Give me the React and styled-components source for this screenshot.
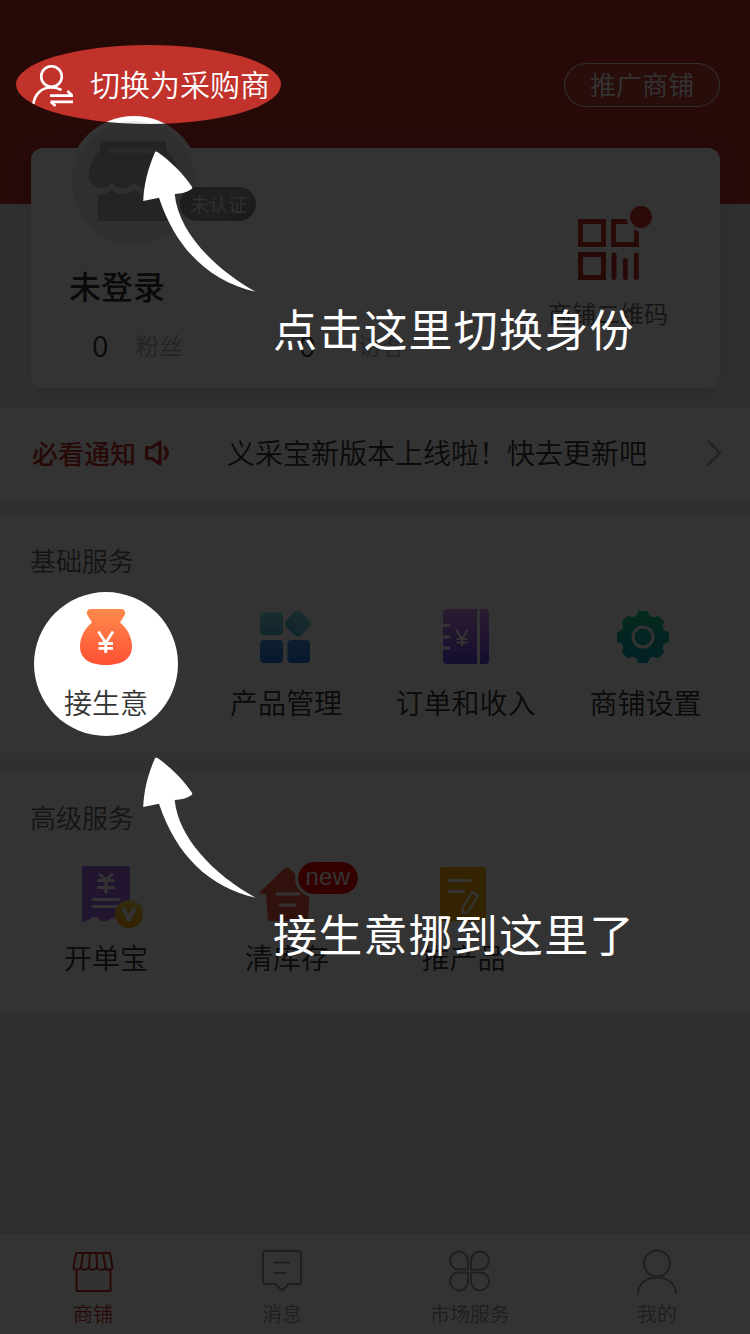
import React from "react";
import styled, { createGlobalStyle } from "styled-components";

const RED = "#c1322b";

const GlobalStyle = createGlobalStyle`
  *, *::before, *::after { box-sizing: border-box; }
  body {
    margin: 0;
    background: #f0f0f0;
    font-family: "Noto Sans CJK SC", "Noto Sans", sans-serif;
    font-weight: 350;
    color: #333;
  }
  svg { display: block; overflow: visible; flex: none; }
`;

const Screen = styled.div`
  position: relative;
  display: flex;
  flex-direction: column;
  width: 750px;
  height: 1334px;
  overflow: hidden;
  background: #f0f0f0;
  white-space: nowrap;
`;

const Hero = styled.header`
  height: 408px;
  flex: none;
  background: linear-gradient(${RED} 204px, #f0f0f0 204px);
`;

const HeroBar = styled.div`
  display: flex;
  justify-content: space-between;
  height: 148px;
  padding: 63px 30px 0 32px;
`;

const SwitchRole = styled.div`
  display: flex;
  align-items: center;
  gap: 17px;
  height: 44px;
  color: #fff;
  font-size: 30px;
  line-height: 40px;
`;

const SwitchLabel = styled.span`
  padding-bottom: 4px;
`;

const PromoteButton = styled.div`
  width: 156px;
  height: 44px;
  border: 1px solid rgba(255, 255, 255, 0.9);
  border-radius: 22px;
  background: rgba(255, 255, 255, 0.08);
  color: #fff;
  font-size: 26px;
  line-height: 39px;
  text-align: center;
`;

const ShopCard = styled.section`
  position: relative;
  display: flex;
  justify-content: space-between;
  height: 240px;
  margin: 0 30px 0 31px;
  padding: 0 52px 0 38px;
  border-radius: 12px;
  background: #fff;
  box-shadow: 0 6px 24px rgba(0, 0, 0, 0.14);
`;

const Avatar = styled.div`
  position: absolute;
  left: 37px;
  top: -32px;
  width: 132px;
  height: 132px;
  padding: 5px 4px 3px;
  border-radius: 50%;
  background: #fff;
`;

const AvatarFace = styled.div`
  width: 124px;
  height: 124px;
  border-radius: 50%;
  background: #ececec;
`;

const UnverifiedTag = styled.div`
  position: absolute;
  left: 112px;
  top: 71px;
  width: 76px;
  height: 34px;
  padding-left: 10px;
  border-radius: 17px;
  background: linear-gradient(135deg, #888, #a0a0a0 50%, #7d7d7d);
  color: #f2f2f2;
  font-size: 19px;
  line-height: 33px;
`;

const ShopInfo = styled.div`
  padding-top: 114px;
`;

const ShopName = styled.h1`
  margin: 0;
  font-size: 32px;
  font-weight: 500;
  line-height: 46px;
`;

const Stats = styled.div`
  display: flex;
  margin-top: 14px;
  padding-left: 23px;
  line-height: 44px;
`;

const Stat = styled.div`
  display: flex;
  gap: ${(p) => p.$gap}px;
  width: 207px;
  font-size: 30px;
`;

const StatLabel = styled.span`
  padding-top: 1px;
  color: #b0b0b0;
  font-size: 24px;
`;

const QrEntry = styled.div`
  display: flex;
  flex-direction: column;
  align-items: center;
  gap: 15px;
  padding-top: 57px;
  color: #666;
  font-size: 24px;
  line-height: 34px;
`;

const Notice = styled.section`
  display: flex;
  align-items: center;
  height: 90px;
  flex: none;
  padding: 0 28px 0 32px;
  background: #fff;
`;

const NoticeTag = styled.div`
  display: flex;
  align-items: center;
  gap: 9px;
  width: 195px;
  color: ${RED};
  font-size: 26px;
  font-weight: 500;
`;

const NoticeLabel = styled.span`
  padding-bottom: 2px;
`;

const NoticeText = styled.div`
  flex: 1;
  padding-bottom: 2px;
  font-size: 28px;
`;

const Panel = styled.section`
  height: ${(p) => p.$height}px;
  flex: none;
  margin-top: 20px;
  padding: 29px 14px 0 16px;
  background: #fff;
`;

const PanelTitle = styled.h2`
  margin: ${(p) => p.$shift || 0}px 0 0 14px;
  color: #666;
  font-size: 26px;
  font-weight: 350;
  line-height: 26px;
`;

const Services = styled.div`
  display: grid;
  grid-template-columns: ${(p) => p.$columns};
  margin-top: 29px;
`;

const Service = styled.div`
  display: flex;
  flex-direction: column;
  align-items: center;
  font-size: 28px;
  line-height: 30px;
`;

const ServiceIcon = styled.div`
  position: relative;
  display: flex;
  align-items: center;
  justify-content: center;
  height: 70px;
  margin-bottom: ${(p) => p.$below}px;
  margin-left: ${(p) => p.$nudge || 0}px;
`;

const NewBadge = styled.div`
  position: absolute;
  left: 35px;
  top: 0;
  width: 66px;
  height: 38px;
  border: 3px solid #fff;
  border-radius: 19px;
  background: #f00;
  background-clip: padding-box;
  color: #fff;
  font-family: "Liberation Sans", sans-serif;
  font-size: 24px;
  letter-spacing: 0.4px;
  line-height: 30px;
  text-align: center;
`;

const TabBar = styled.nav`
  display: grid;
  grid-template-columns: 186px 192px 184px 190px;
  height: 101px;
  margin-top: auto;
  border-top: 1px solid #d0d0d0;
  background: #fff;
`;

const Tab = styled.div`
  display: flex;
  flex-direction: column;
  align-items: center;
  padding-top: 15px;
  gap: 7px;
  color: ${(p) => (p.$active ? RED : "#999")};
  font-size: 20px;
  line-height: 28px;
`;

const Guide = styled.div`
  position: absolute;
  inset: 0;
`;

const Layer = styled.svg`
  position: absolute;
  left: ${(p) => p.$x || 0}px;
  top: ${(p) => p.$y || 0}px;
`;

const Hint = styled.p`
  position: absolute;
  left: 273px;
  top: ${(p) => p.$y}px;
  margin: 0;
  color: #fff;
  font-size: 44px;
  font-weight: 400;
  letter-spacing: ${(p) => p.$spacing}px;
  line-height: 60px;
`;

const Gradient = ({ id, from, to }) => (
  <linearGradient id={id} x1="0" y1="0" x2="0" y2="1">
    <stop offset="0" stopColor={from} />
    <stop offset="1" stopColor={to} />
  </linearGradient>
);

const SwitchUserIcon = () => (
  <svg width="41" height="44" fill="none" stroke="#fff" strokeWidth="2.6">
    <circle cx="19.5" cy="13.5" r="10.3" />
    <path d="M1.3 41C3 31 9.5 24.5 19 24.5Q25 24.5 29.5 27" />
    <path d="M18 32.700H41M18.500 38.800H41" strokeWidth="2.800" />
    <path d="M40 32.500L35.500 28M19 39L23.500 43" />
  </svg>
);

const StoreIcon = () => (
  <svg width="124" height="124" viewBox="72 121 124 124" fill="#b6b6b6">
    <path d="M102 140.700H164Q166 140.700 166 142.700V149Q179 165 179 176A11.500 11.500 0 0 1 156.700 183Q146 194 134 183Q123 194 111.700 183A13 13 0 0 1 88.700 176C88.700 168 93 159 100 149V142.700Q100 140.700 102 140.700Z" />
    <path d="M98 195Q105 195 111.700 189.500Q123 199 134 189.500Q146 199 156.700 189.500Q163 195 170 195V221H98Z" />
    <rect x="108.700" y="149" width="49" height="4" fill="#cfcfcf" />
  </svg>
);

const QrIcon = () => (
  <svg width="62" height="76" viewBox="577 205 62 76">
    <g fill="none" stroke={RED} strokeWidth="5">
      <rect x="580.500" y="221.500" width="23" height="23" />
      <rect x="613.500" y="221.500" width="23" height="23" />
      <rect x="580.500" y="254.500" width="23" height="23" />
      <path d="M614 255V277.500M625.300 260.500V277.500M636.300 255V277.500" strokeLinecap="round" />
    </g>
    <circle cx="641" cy="217" r="14.500" fill="#fff" />
    <circle cx="641" cy="217" r="11" fill="#d8382c" />
  </svg>
);

const SpeakerIcon = () => (
  <svg width="26" height="28" viewBox="0 0 26 28" fill="none" stroke={RED} strokeWidth="3.200">
    <path d="M1.600 8.500H7L15 3V25L7 19.500H1.600Z" strokeLinejoin="round" />
    <path d="M19 7.500Q25.500 14 19 20.500" />
  </svg>
);

const ChevronIcon = () => (
  <svg width="16" height="28" viewBox="0 0 16 28" fill="none" stroke="#aaa" strokeWidth="2.500">
    <path d="M1.500 1.500L14 14L1.500 26.500" />
  </svg>
);

const MoneyBagIcon = () => (
  <svg width="52" height="56">
    <Gradient id="bag" from="#ff8a4c" to="#ff5033" />
    <path
      fill="url(#bag)"
      d="M10 0H42Q46 1 45 5.500L40 13.500C47 19 52 28 52 37.500C52 50 42 56 26 56C10 56 0 50 0 37.500C0 28 5 19 12 13.500L7 5.500Q6 1 10 0Z"
    />
    <path d="M18.400 22.500L25.700 34L33 22.500M25.700 33V44M18.500 34.500H33M18.500 39.300H33" fill="none" stroke="#fff" strokeWidth="2.800" />
  </svg>
);

const ProductsIcon = () => (
  <svg width="52" height="56" viewBox="0 0 52 56">
    <Gradient id="prodTop" from="#7fe0ec" to="#55b8e0" />
    <Gradient id="prodBottom" from="#3f9ae8" to="#2673e0" />
    <rect y="3.500" width="23" height="22.500" rx="4" fill="url(#prodTop)" />
    <rect x="27.500" y="4" width="21.500" height="21.500" rx="5" fill="url(#prodTop)" transform="rotate(45 38.250 14.500)" />
    <rect y="31" width="23" height="23" rx="4" fill="url(#prodBottom)" />
    <rect x="27.500" y="31" width="22.500" height="23" rx="4" fill="url(#prodBottom)" />
  </svg>
);

const OrdersIcon = () => (
  <svg width="46" height="56">
    <Gradient id="orders" from="#d98ae8" to="#6a46f0" />
    <rect width="46" height="55" rx="4" fill="url(#orders)" />
    <path d="M35.500 0V55" stroke="#fff" strokeWidth="3" />
    <path d="M0 16.500H6M0 28H6M0 39H6" stroke="#fff" strokeWidth="2.800" strokeLinecap="round" />
    <path d="M13 20.500L19 30L25 20.500M19 29V37M13.500 30H24.500M13.500 33.500H24.500" fill="none" stroke="#fff" strokeWidth="2.200" />
  </svg>
);

const GearIcon = () => (
  <svg width="52" height="52" viewBox="-26 -26 52 52">
    <linearGradient id="gear" gradientUnits="userSpaceOnUse" x1="0" y1="-26" x2="0" y2="26">
      <stop offset="0" stopColor="#19d28c" />
      <stop offset="1" stopColor="#0f9fbe" />
    </linearGradient>
    <path
      fill="url(#gear)"
      d="M-5 -26H5C6 -20 10 -18 15 -21.500L21.500 -15C18 -10 20 -6 26 -5V5C20 6 18 10 21.500 15L15 21.500C10 18 6 20 5 26H-5C-6 20 -10 18 -15 21.500L-21.500 15C-18 10 -20 6 -26 5V-5C-20 -6 -18 -10 -21.500 -15L-15 -21.500C-10 -18 -6 -20 -5 -26Z"
    />
    <circle r="10" fill="none" stroke="#fff" strokeWidth="3" />
  </svg>
);

const BillIcon = () => (
  <svg width="48" height="56">
    <Gradient id="coin" from="#ffd450" to="#ffa800" />
    <path fill="#a46cf0" d="M2 0H46Q48 0 48 2V56Q42 56 37 53Q32 50 28 53Q22 58 17 53Q13 49 8 53Q4 56 0 56V2Q0 0 2 0Z" />
    <g fill="none" stroke="#fff" strokeWidth="3" strokeLinecap="round">
      <path d="M18 8.500L24 14L30 8.500M24 14V26M16.500 14.500H31.500M16.500 21.500H31.500" />
      <path d="M11 33.500H37M11 40.500H37" />
    </g>
    <circle cx="47" cy="48" r="14" fill="url(#coin)" />
    <path d="M42 43.500L47 53.500L52 43.500" fill="none" stroke="#fff" strokeWidth="4" strokeLinecap="round" strokeLinejoin="round" />
  </svg>
);

const HouseIcon = () => (
  <svg width="54" height="54">
    <path fill="#f4553c" d="M25 1Q27 -0.500 29 1L53 24Q55 27 51 27H49.500L48 52Q48 54 46 54H10Q8 54 8 52L6 27H1.500Q-1.500 27 1 24Z" />
    <path d="M17 27H39M20 38H35" stroke="#fff" strokeWidth="2.800" strokeLinecap="round" />
  </svg>
);

const NoteIcon = () => (
  <svg width="46" height="54" fill="none" stroke="#fff" strokeWidth="2.800">
    <rect width="46" height="54" rx="2" fill="#ffb000" stroke="none" />
    <path d="M9 13.500H30M9 24.500H24" strokeLinecap="round" />
    <path d="M32 25L38 28.500L28 45L22.500 46V41Z" strokeWidth="2.200" strokeLinejoin="round" />
  </svg>
);

const TabShopIcon = () => (
  <svg width="42" height="44" viewBox="0 0 42 44" fill="none" stroke={RED} strokeWidth="2" strokeLinejoin="round">
    <path d="M4.500 19V42H38.500V19" fill="#fff5f6" />
    <path fill="#fff" d="M4 4H38L40.500 18.500C39 21.500 34 21.500 33.500 18.500C32 21.500 26 21.500 25 18.500C23 21.500 18 21.500 17 18.500C15 21.500 10 21.500 9 18.500C7 21.500 2 21.500 1.500 18.500Z" />
    <path d="M11 4L9 18.500M18 4L17 18.500M24.500 4L25 18.500M31 4L33.500 18.500" />
  </svg>
);

const TabMessageIcon = () => (
  <svg width="40" height="44" fill="none" stroke="#999" strokeWidth="2" strokeLinejoin="round" strokeLinecap="round">
    <path d="M4 2H36Q39 2 39 5V32Q39 35 36 35H27L20 41.500L13 35H4Q1 35 1 32V5Q1 2 4 2Z" />
    <path d="M12 13.500H28M12 24H23" />
  </svg>
);

const TabMarketIcon = () => (
  <svg width="40" height="44" fill="none" stroke="#999" strokeWidth="2">
    <path d="M18 20.500H10A9 9 0 1 1 18 11.500Z" />
    <path d="M21 20.500H29A9 9 0 1 0 21 11.500Z" />
    <path d="M18 23.500H10A9 9 0 1 0 18 32.500Z" />
    <path d="M21 23.500H29A9 9 0 1 1 21 32.500Z" />
  </svg>
);

const TabUserIcon = () => (
  <svg width="40" height="44" fill="none" stroke="#999" strokeWidth="2">
    <circle cx="20" cy="14.500" r="13" />
    <path d="M1 44.500C1 35 9 28.500 20 28.500S39 35 39 44.500" />
  </svg>
);

const PointerArrow = ({ x, y }) => (
  <Layer $x={x} $y={y} width="113" height="142">
    <path
      fill="#fff"
      d="M12 1.200Q12.800 0 14.500 1C26 9 40 22 49 35.800Q49.800 37.300 48.300 38.300C44 41.500 38 42.600 31.700 43C35 80 70 117 112.600 140.700C66 130 33 98 16 46.700L0.200 50C1 33 5 17 12 1.200Z"
    />
  </Layer>
);

const basics = [
  { label: "接生意", Icon: MoneyBagIcon },
  { label: "产品管理", Icon: ProductsIcon },
  { label: "订单和收入", Icon: OrdersIcon },
  { label: "商铺设置", Icon: GearIcon, nudge: -6 },
];

const advanced = [
  { label: "开单宝", Icon: BillIcon },
  { label: "清库存", Icon: HouseIcon, isNew: true },
  { label: "推产品", Icon: NoteIcon, nudge: -1 },
];

const tabs = [
  { label: "商铺", Icon: TabShopIcon, active: true },
  { label: "消息", Icon: TabMessageIcon },
  { label: "市场服务", Icon: TabMarketIcon },
  { label: "我的", Icon: TabUserIcon },
];

const ServiceRow = ({ items, columns, below }) => (
  <Services $columns={columns}>
    {items.map(({ label, Icon, isNew, nudge }) => (
      <Service key={label}>
        <ServiceIcon $below={below} $nudge={nudge}>
          <Icon />
          {isNew && <NewBadge>new</NewBadge>}
        </ServiceIcon>
        {label}
      </Service>
    ))}
  </Services>
);

export default function App() {
  return (
    <Screen>
      <GlobalStyle />
      <Hero>
        <HeroBar>
          <SwitchRole>
            <SwitchUserIcon />
            <SwitchLabel>切换为采购商</SwitchLabel>
          </SwitchRole>
          <PromoteButton>推广商铺</PromoteButton>
        </HeroBar>
        <ShopCard>
          <Avatar>
            <UnverifiedTag>未认证</UnverifiedTag>
            <AvatarFace>
              <StoreIcon />
            </AvatarFace>
          </Avatar>
          <ShopInfo>
            <ShopName>未登录</ShopName>
            <Stats>
              <Stat $gap={27}>
                0<StatLabel>粉丝</StatLabel>
              </Stat>
              <Stat $gap={42}>
                0<StatLabel>访客</StatLabel>
              </Stat>
            </Stats>
          </ShopInfo>
          <QrEntry>
            <QrIcon />
            商铺二维码
          </QrEntry>
        </ShopCard>
      </Hero>

      <Notice>
        <NoticeTag>
          <NoticeLabel>必看通知</NoticeLabel>
          <SpeakerIcon />
        </NoticeTag>
        <NoticeText>义采宝新版本上线啦！快去更新吧</NoticeText>
        <ChevronIcon />
      </Notice>

      <Panel $height={235}>
        <PanelTitle>基础服务</PanelTitle>
        <ServiceRow items={basics} columns="180px 180px 179px 181px" below={15} />
      </Panel>

      <Panel $height={240}>
        <PanelTitle $shift={2}>高级服务</PanelTitle>
        <ServiceRow items={advanced} columns="180px 182px 171px" below={13} />
      </Panel>

      <TabBar>
        {tabs.map(({ label, Icon, active }) => (
          <Tab key={label} $active={active}>
            <Icon />
            {label}
          </Tab>
        ))}
      </TabBar>

      <Guide>
        <Layer width="750" height="1334">
          <path
            fill="#000"
            fillOpacity="0.8"
            fillRule="evenodd"
            d="M0 0H750V1334H0ZM16 84.500A132.500 39.500 0 0 0 281 84.500A132.500 39.500 0 0 0 16 84.500ZM34 664A72 72 0 0 0 178 664A72 72 0 0 0 34 664Z"
          />
        </Layer>
        <PointerArrow x={143} y={151} />
        <PointerArrow x={143} y={757} />
        <Hint $y={298} $spacing={1.2}>点击这里切换身份</Hint>
        <Hint $y={903} $spacing={1.2}>接生意挪到这里了</Hint>
      </Guide>
    </Screen>
  );
}
